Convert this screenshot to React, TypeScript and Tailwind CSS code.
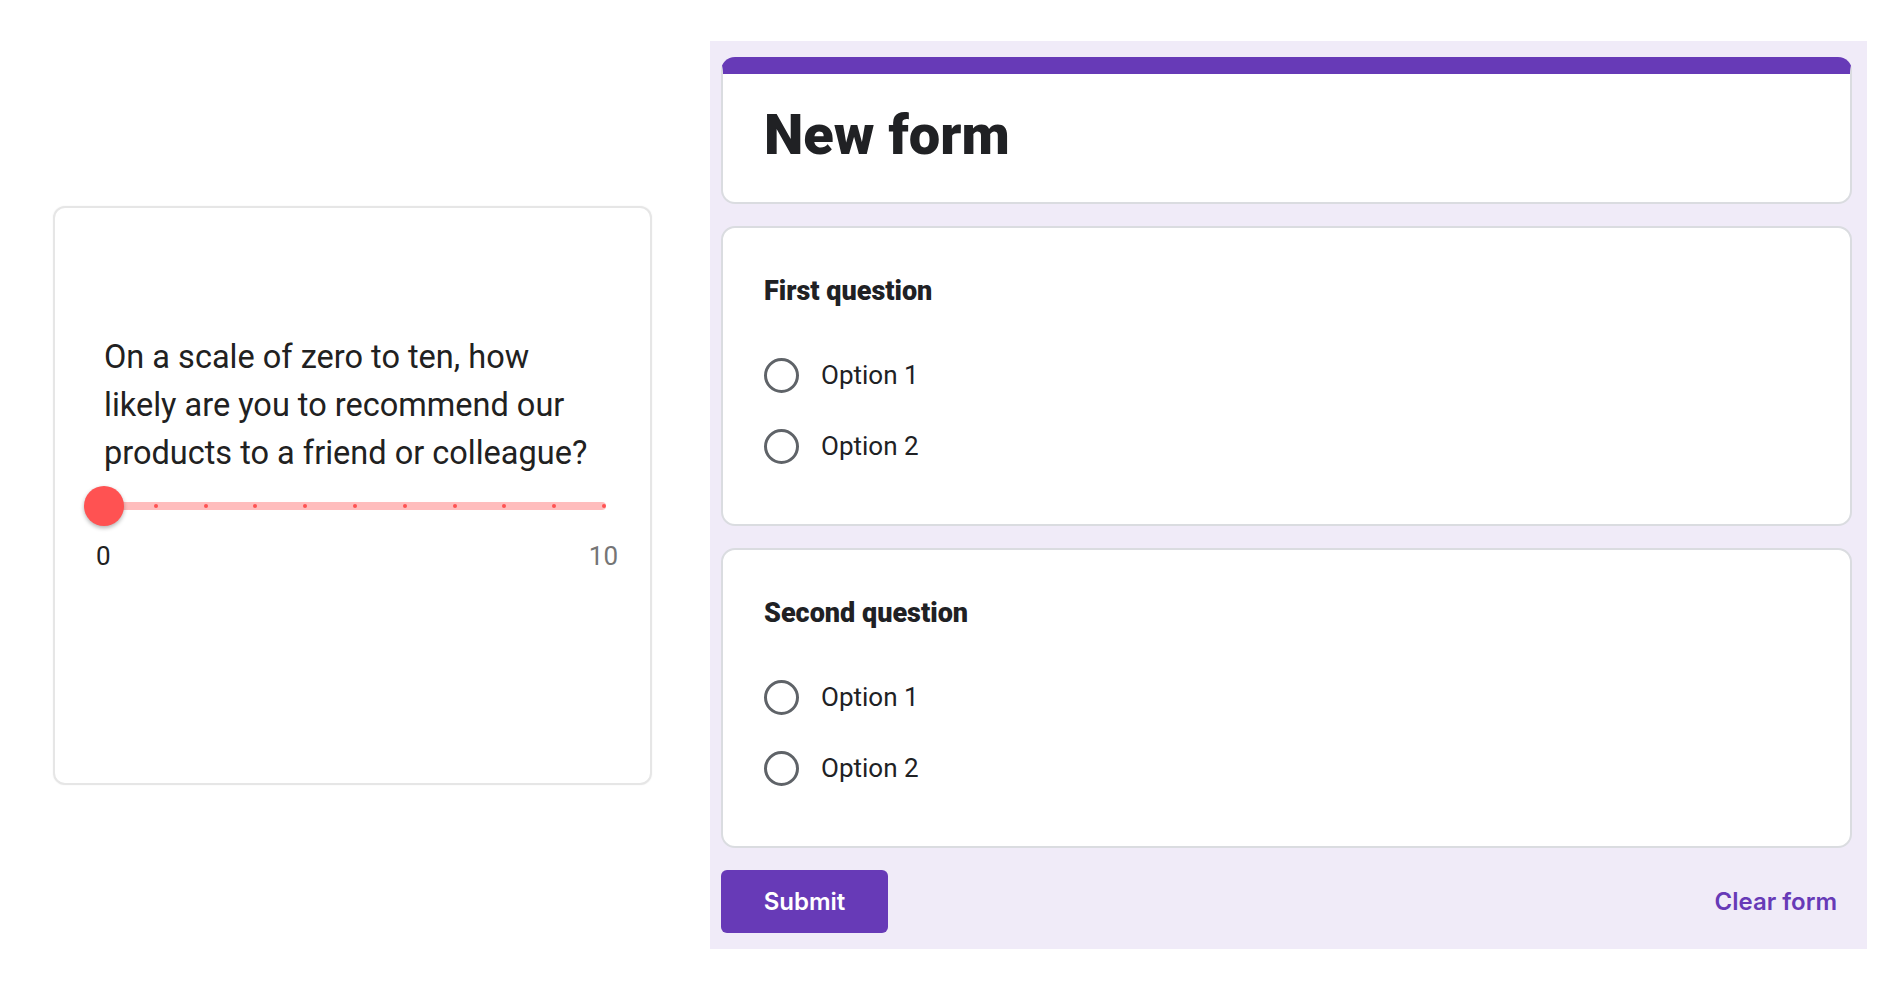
import React from "react";

const roboto = { fontFamily: "Roboto, 'Liberation Sans', sans-serif" };

function ScaleCard() {
  return (
    <div
      className="ml-[53px] mt-[206px] w-[599px] h-[579px] shrink-0 rounded-[12px] border-2 border-[#e6e6e6] bg-white pl-[49px] pt-[125px] shadow-[0_0_2px_rgba(0,0,0,0.06)]"
      style={roboto}
    >
      <p className="w-[490px] text-[32.5px] leading-[48px] text-[#212121]">
        On a scale of zero to ten, how likely are you to recommend our products to a friend or colleague?
      </p>

      {/* slider */}
      <div className="relative mt-[9px] h-10 w-[502px]">
        <div className="absolute left-0 right-0 top-1/2 h-[8px] -translate-y-1/2 rounded-full bg-[#ffbdbd]">
          <div className="flex h-full items-center justify-between">
            {Array.from({ length: 11 }).map((_, i) => (
              <span key={i} className="h-[4px] w-[4px] rounded-full bg-[#ff5252]" />
            ))}
          </div>
        </div>
        <div className="absolute -left-5 top-0 h-10 w-10 rounded-full bg-[#ff5252] shadow-[0_2px_4px_rgba(0,0,0,0.3)]" />
      </div>

      <div className="ml-[-8px] mt-[14px] flex w-[522px] justify-between text-[26px] leading-[32px]">
        <span className="text-[#212121]">0</span>
        <span className="text-[#757575]">10</span>
      </div>
    </div>
  );
}

function Radio({ label }: { label: string }) {
  return (
    <div className="flex h-[71px] items-center gap-[22px]">
      <span className="h-[35px] w-[35px] rounded-full border-[3.5px] border-[#5f6368]" />
      <span className="text-[26px] text-[#202124]">{label}</span>
    </div>
  );
}

function Question({ title }: { title: string }) {
  return (
    <div className="rounded-[14px] border-2 border-[#dadce0] bg-white px-[41px] pb-[42px] pt-[45px]">
      <h2 className="text-[27px] font-black leading-[36px] text-[#202124]">{title}</h2>
      <div className="mt-[31px] flex flex-col">
        <Radio label="Option 1" />
        <Radio label="Option 2" />
      </div>
    </div>
  );
}

export default function App() {
  return (
    <div className="flex h-[993px] w-[1890px] items-start bg-white">
      <ScaleCard />

      <div
        className="ml-[58px] mt-[41px] flex w-[1157px] flex-col gap-[22px] bg-[#f0ebf8] pb-[16px] pl-[11px] pr-[15px] pt-[16px]"
        style={roboto}
      >
        <div className="rounded-[14px] border-2 border-t-[17px] border-[#dadce0] border-t-[#673ab7] bg-white px-[41px] pb-[33px] pt-[28px]">
          <h1 className="text-[56px] font-black leading-[67px] text-[#202124]">New form</h1>
        </div>

        <Question title="First question" />
        <Question title="Second question" />

        <div className="flex items-center justify-between" style={{ fontFamily: "Inter, 'Liberation Sans', sans-serif" }}>
          <button className="h-[63px] w-[167px] rounded-[6px] bg-[#673ab7] text-[24px] font-semibold text-white">
            Submit
          </button>
          <button className="mr-[15px] text-[24px] font-semibold text-[#673ab7]">Clear form</button>
        </div>
      </div>
    </div>
  );
}
